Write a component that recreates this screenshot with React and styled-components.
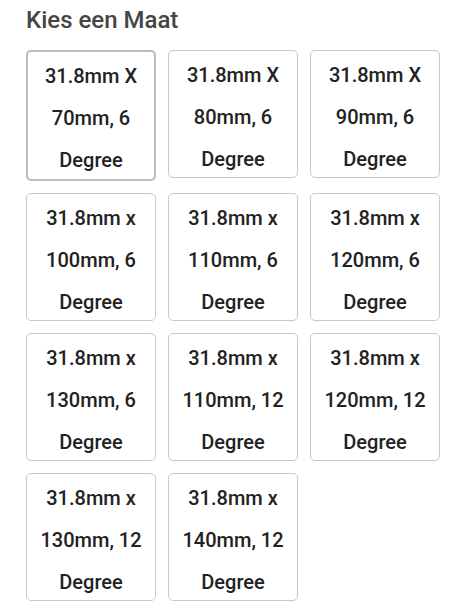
import styled, { createGlobalStyle } from 'styled-components'

const GlobalStyle = createGlobalStyle`
  body {
    margin: 0;
    background: #ffffff;
    font-family: Roboto, "Liberation Sans", sans-serif;
  }
`

const Picker = styled.div`
  padding: 6px 0 0 26px;
`

const Title = styled.h3`
  margin: 0 0 16px;
  font-size: 24px;
  line-height: 28px;
  font-weight: 500;
  color: #454545;
`

const SizeGrid = styled.div`
  display: flex;
  flex-wrap: wrap;
  gap: 12px;
  width: 416px;
`

const SizeOption = styled.button`
  box-sizing: border-box;
  width: 130px;
  height: ${p => (p.$selected ? '131px' : '128px')};
  padding: 3px 4px 0;
  background: #ffffff;
  border: ${p => (p.$selected ? '2px solid #bcbcbc' : '1px solid #c8c8c8')};
  border-radius: 5px;
  font-family: Roboto, "Liberation Sans", sans-serif;
  font-size: 20px;
  font-weight: 500;
  line-height: 42px;
  color: #222222;
  text-align: center;
  cursor: pointer;
  display: flex;
  flex-direction: column;
  align-items: center;
  justify-content: flex-start;
`

const sizes = [
  ['31.8mm X', '70mm, 6', 'Degree'],
  ['31.8mm X', '80mm, 6', 'Degree'],
  ['31.8mm X', '90mm, 6', 'Degree'],
  ['31.8mm x', '100mm, 6', 'Degree'],
  ['31.8mm x', '110mm, 6', 'Degree'],
  ['31.8mm x', '120mm, 6', 'Degree'],
  ['31.8mm x', '130mm, 6', 'Degree'],
  ['31.8mm x', '110mm, 12', 'Degree'],
  ['31.8mm x', '120mm, 12', 'Degree'],
  ['31.8mm x', '130mm, 12', 'Degree'],
  ['31.8mm x', '140mm, 12', 'Degree'],
]

function App() {
  return (
    <>
      <GlobalStyle />
      <Picker>
        <Title>Kies een Maat</Title>
        <SizeGrid>
          {sizes.map((lines, i) => (
            <SizeOption key={i} $selected={i === 0}>
              {lines.map(l => (
                <span key={l}>{l}</span>
              ))}
            </SizeOption>
          ))}
        </SizeGrid>
      </Picker>
    </>
  )
}

export default App
